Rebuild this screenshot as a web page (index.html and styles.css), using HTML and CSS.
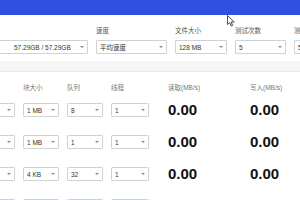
FILE: index.html
```html
<!DOCTYPE html>
<html>
<head>
<meta charset="utf-8">
<link rel="stylesheet" href="styles.css">
</head>
<body>
<div class="topbar"></div>
<section class="card settings">
  <div class="field drive">
    <div class="label"></div>
    <div class="select"><span class="value">57.29GB / 57.29GB</span><i class="caret"></i></div>
  </div>
  <div class="field speed">
    <div class="label">速度</div>
    <div class="select"><span class="value">平均速度</span><i class="caret"></i></div>
  </div>
  <div class="field size">
    <div class="label">文件大小</div>
    <div class="select"><span class="value">128 MB</span><i class="caret"></i></div>
  </div>
  <div class="field count">
    <div class="label">测试次数</div>
    <div class="select"><span class="value">5</span><i class="caret"></i></div>
  </div>
  <div class="field more">
    <div class="label">测试单位</div>
    <div class="select"><span class="value">5</span><i class="caret"></i></div>
  </div>
</section>
<section class="card bench">
  <div class="row head">
    <div class="c0"></div>
    <div class="c1">块大小</div>
    <div class="c2">队列</div>
    <div class="c3">线程</div>
    <div class="rd">读取(MB/s)</div>
    <div class="wr">写入(MB/s)</div>
  </div>
  <div class="row">
    <div class="c0 select"><span class="value"></span><i class="caret"></i></div>
    <div class="c1 select"><span class="value">1 MB</span><i class="caret"></i></div>
    <div class="c2 select"><span class="value">8</span><i class="caret"></i></div>
    <div class="c3 select"><span class="value">1</span><i class="caret"></i></div>
    <div class="rd num">0.00</div>
    <div class="wr num">0.00</div>
  </div>
  <div class="row">
    <div class="c0 select"><span class="value"></span><i class="caret"></i></div>
    <div class="c1 select"><span class="value">1 MB</span><i class="caret"></i></div>
    <div class="c2 select"><span class="value">1</span><i class="caret"></i></div>
    <div class="c3 select"><span class="value">1</span><i class="caret"></i></div>
    <div class="rd num">0.00</div>
    <div class="wr num">0.00</div>
  </div>
  <div class="row">
    <div class="c0 select"><span class="value"></span><i class="caret"></i></div>
    <div class="c1 select"><span class="value">4 KB</span><i class="caret"></i></div>
    <div class="c2 select"><span class="value">32</span><i class="caret"></i></div>
    <div class="c3 select"><span class="value">1</span><i class="caret"></i></div>
    <div class="rd num">0.00</div>
    <div class="wr num">0.00</div>
  </div>
  <div class="row">
    <div class="c0 select"><span class="value"></span><i class="caret"></i></div>
    <div class="c1 select"><span class="value">4 KB</span><i class="caret"></i></div>
    <div class="c2 select"><span class="value">1</span><i class="caret"></i></div>
    <div class="c3 select"><span class="value">1</span><i class="caret"></i></div>
    <div class="rd num">0.00</div>
    <div class="wr num">0.00</div>
  </div>
</section>
<svg class="cursor" width="8" height="12" viewBox="0 0 8 12"><path d="M0.5 0.5 L0.5 9.5 L2.7 7.5 L4.2 11 L5.6 10.4 L4.2 7 L7.2 7 Z" fill="#fff" stroke="#222" stroke-width="0.8" stroke-linejoin="round"/></svg>
</body>
</html>
```
FILE: styles.css
```css
html, body {
  margin: 0;
  padding: 0;
}
body {
  width: 300px;
  height: 200px;
  overflow: hidden;
  background: #f6f6f7;
  font-family: "Liberation Sans", "Noto Sans CJK SC", sans-serif;
  color: #333;
}
.topbar {
  height: 15px;
  background: #3051df;
}
.card {
  background: #fff;
}
.settings {
  display: flex;
  gap: 8px;
  padding: 11px 0 7px 0;
  white-space: nowrap;
}
.field {
  flex: none;
  display: flex;
  flex-direction: column;
}
.label {
  font-size: 6.5px;
  line-height: 10px;
  height: 10px;
  color: #555;
  margin-bottom: 4px;
}
.drive { width: 160px; margin-left: -72px; }
.drive .value { padding-left: 82px; }
.speed { width: 71px; }
.size { width: 52px; }
.count { width: 51px; }
.more { width: 51px; }
.select {
  box-sizing: border-box;
  height: 14px;
  border: 1px solid #cfd2d6;
  border-radius: 1px;
  background: #fff;
  display: flex;
  align-items: center;
  padding: 0 2px 0 3px;
  font-size: 6.5px;
  color: #333;
}
.select .value {
  flex: 1;
  overflow: hidden;
}
.caret {
  width: 0;
  height: 0;
  border-left: 2px solid transparent;
  border-right: 2px solid transparent;
  border-top: 2.5px solid #8a8f96;
  margin-right: 1px;
}
.bench {
  margin-top: 10px;
  border-top: 1px solid #e9eaec;
  padding-top: 11px;
}
.row {
  display: flex;
  align-items: center;
  gap: 8px;
  height: 32px;
  margin-left: -21px;
  white-space: nowrap;
}
.row.head {
  height: 10px;
  font-size: 6.5px;
  line-height: 10px;
  color: #777;
  margin-bottom: 1px;
}
.c0, .c1, .c2 { width: 36px; flex: none; }
.c3 { width: 38px; flex: none; }
.rd { width: 74px; margin-left: 11px; flex: none; }
.wr { width: 60px; flex: none; }
.num {
  font-size: 15px;
  font-weight: bold;
  color: #111;
  line-height: 16px;
}
.cursor {
  position: absolute;
  left: 227px;
  top: 15px;
}
```
